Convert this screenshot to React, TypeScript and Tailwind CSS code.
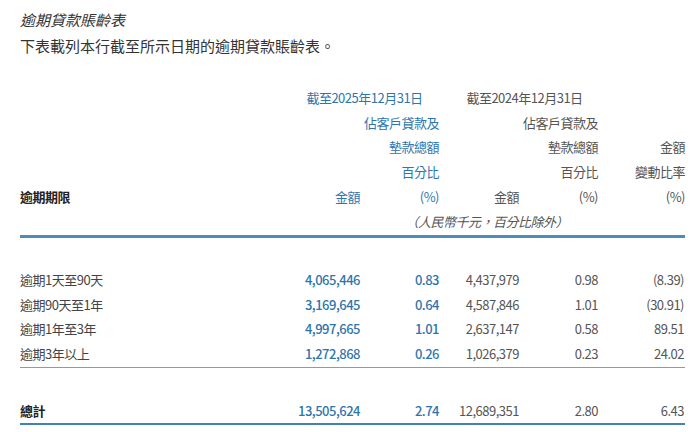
const F = { fontFamily: '"Noto Sans CJK TC", "Noto Sans", sans-serif' };
const rows = [
  ["逾期1天至90天", "4,065,446", "0.83", "4,437,979", "0.98", "(8.39)"],
  ["逾期90天至1年", "3,169,645", "0.64", "4,587,846", "1.01", "(30.91)"],
  ["逾期1年至3年", "4,997,665", "1.01", "2,637,147", "0.58", "89.51"],
  ["逾期3年以上", "1,272,868", "0.26", "1,026,379", "0.23", "24.02"],
];
function Row({ r, bold }: { r: string[]; bold?: boolean }) {
  return (
    <div className="grid grid-cols-[260px_80px_79px_80px_79px_87px] h-[24.5px] items-center text-[13px] tracking-[-0.5px]">
      <div className={bold ? "font-bold text-[#222]" : "text-[#444]"}>{r[0]}</div>
      <div className="text-right text-[#2f75ad] font-medium">{r[1]}</div>
      <div className="text-right text-[#2f75ad] font-medium">{r[2]}</div>
      <div className="text-right text-[#555]">{r[3]}</div>
      <div className="text-right text-[#555]">{r[4]}</div>
      <div className="text-right text-[#555] pr-[1px]">{r[5]}</div>
    </div>
  );
}
export default function App() {
  return (
    <div style={F} className="w-[700px] h-[432px] bg-white overflow-hidden px-[20px] pt-[9px]">
      <div className="text-[15px] italic text-[#333] leading-[22px]">逾期貸款賬齡表</div>
      <div className="text-[15px] text-[#333] leading-[22px] mt-[4px]">下表載列本行截至所示日期的逾期貸款賬齡表。</div>
      <div className="w-[665px] mt-[29px] text-[13px] tracking-[-0.5px]">
        <div className="grid grid-cols-[260px_80px_79px_80px_79px_87px] h-[24px] items-center">
          <div />
          <div className="col-span-2 text-center text-[#2f75ad] pl-[10px]">截至2025年12月31日</div>
          <div className="col-span-2 text-center text-[#555] pl-[12px]">截至2024年12月31日</div>
          <div />
        </div>
        {[["佔客戶貸款及", ""], ["墊款總額", "金額"], ["百分比", "變動比率"]].map((h, i) => (
          <div key={i} className="grid grid-cols-[260px_80px_79px_80px_79px_87px] h-[24.5px] items-center">
            <div /><div />
            <div className="text-right text-[#2f75ad] whitespace-nowrap">{h[0]}</div>
            <div />
            <div className="text-right text-[#555] whitespace-nowrap">{h[0]}</div>
            <div className="text-right text-[#555]">{h[1]}</div>
          </div>
        ))}
        <div className="grid grid-cols-[260px_80px_79px_80px_79px_87px] h-[26px] items-center">
          <div className="font-bold text-[#222]">逾期期限</div>
          <div className="text-right text-[#2f75ad]">金額</div>
          <div className="text-right text-[#2f75ad]">(%)</div>
          <div className="text-right text-[#555]">金額</div>
          <div className="text-right text-[#555]">(%)</div>
          <div className="text-right text-[#555]">(%)</div>
        </div>
        <div className="grid grid-cols-[260px_80px_79px_80px_79px_87px] h-[24px] items-center">
          <div />
          <div className="col-span-4 text-right italic text-[#555] pr-[30px]">（人民幣千元，百分比除外）</div>
        </div>
        <div className="h-[3px] bg-[#4f8db8] mt-[1px]" />
        <div className="h-[30px]" />
        {rows.map((r, i) => <Row key={i} r={r} />)}
        <div className="h-[1px] bg-[#6fa3c8] mt-[1px]" />
        <div className="h-[31px]" />
        <Row r={["總計", "13,505,624", "2.74", "12,689,351", "2.80", "6.43"]} bold />
        <div className="h-[2px] bg-[#3f83b5]" />
      </div>
    </div>
  );
}
